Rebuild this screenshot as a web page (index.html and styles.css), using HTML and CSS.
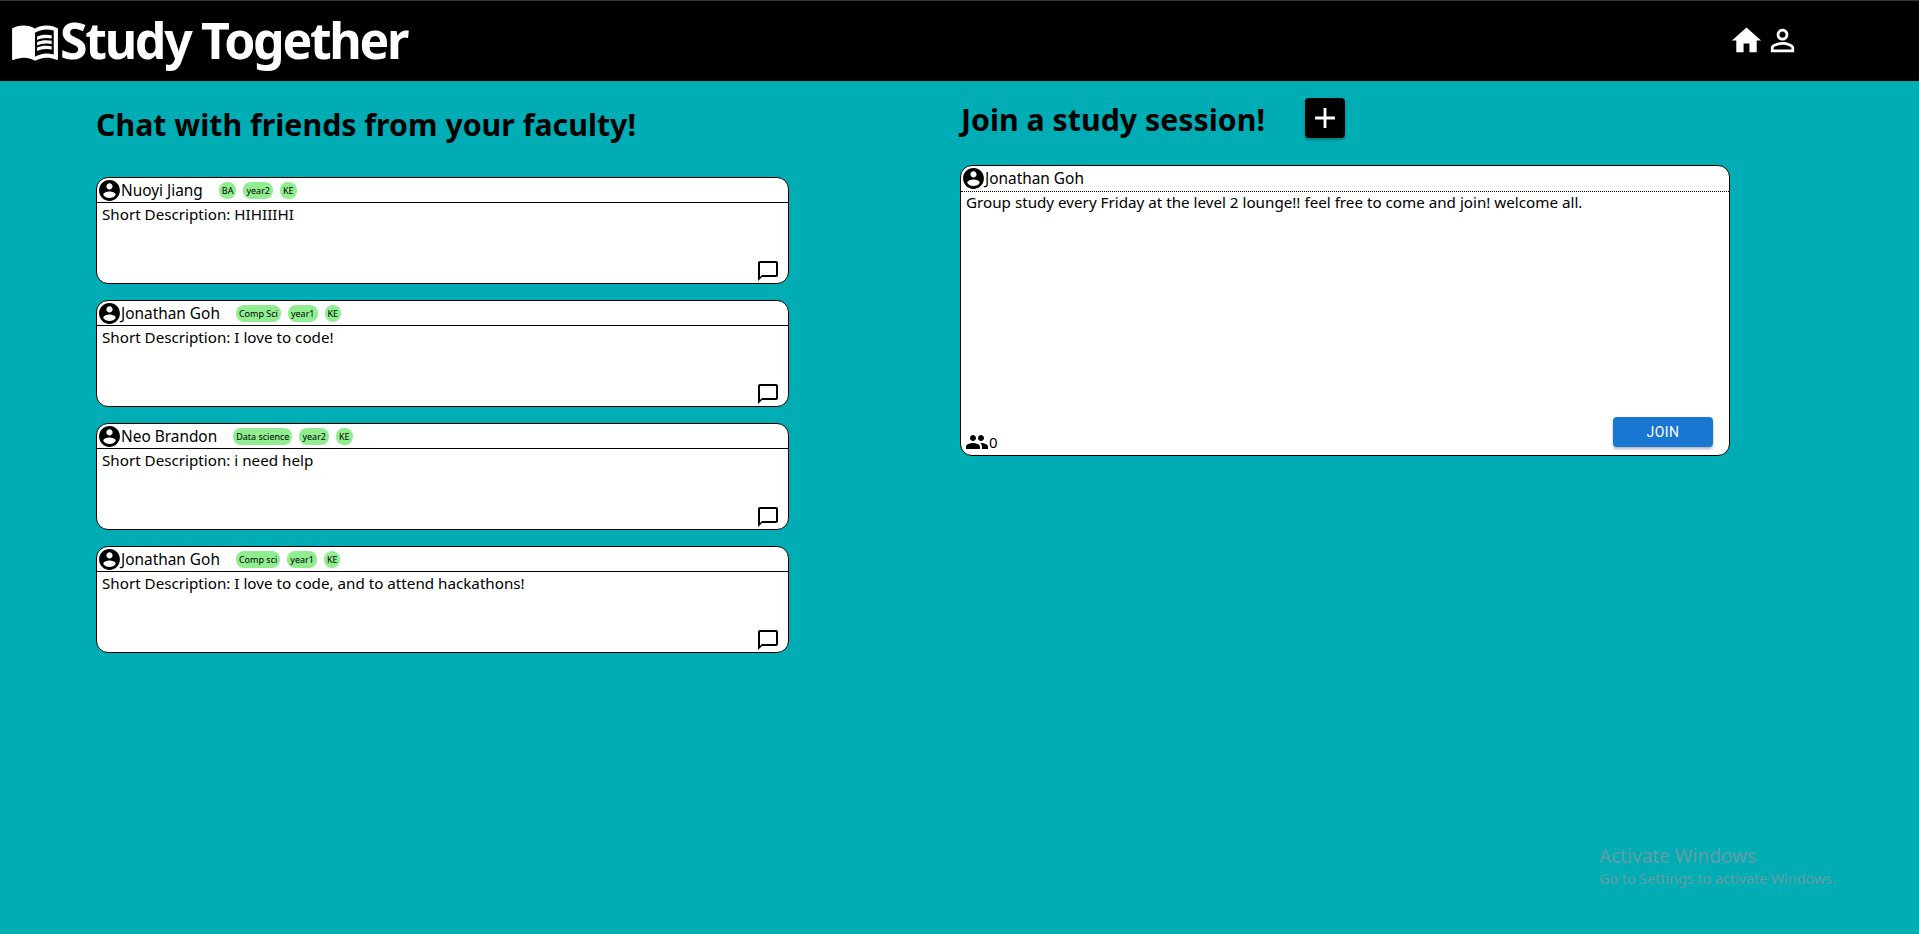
FILE: index.html
```html
<!DOCTYPE html>
<html lang="en">
<head>
	<meta charset="UTF-8">
	<title>Study Together</title>
	<link rel="stylesheet" href="styles.css">
</head>
<body>
	<svg width="0" height="0" class="defs">
		<symbol id="i-account" viewBox="0 0 24 24"><path d="M12 2C6.48 2 2 6.48 2 12s4.48 10 10 10 10-4.48 10-10S17.52 2 12 2zm0 3c1.66 0 3 1.34 3 3s-1.34 3-3 3-3-1.34-3-3 1.34-3 3-3zm0 14.2c-2.5 0-4.71-1.28-6-3.22.03-1.99 4-3.08 6-3.08 1.99 0 5.97 1.09 6 3.08-1.29 1.94-3.5 3.22-6 3.22z"/></symbol>
		<symbol id="i-chat" viewBox="0 0 24 24"><path d="M20 2H4c-1.1 0-2 .9-2 2v18l4-4h14c1.1 0 2-.9 2-2V4c0-1.1-.9-2-2-2zm0 14H6l-2 2V4h16v12z"/></symbol>
	</svg>

	<header class="topbar">
		<div class="brand">
			<svg class="brand-icon" viewBox="0 0 24 24"><path d="M21 5c-1.11-.35-2.33-.5-3.5-.5-1.95 0-4.05.4-5.5 1.5-1.45-1.1-3.55-1.5-5.5-1.5S2.45 4.9 1 6v14.65c0 .25.25.5.5.5.1 0 .15-.05.25-.05C3.1 20.45 5.05 20 6.5 20c1.95 0 4.05.4 5.5 1.5 1.35-.85 3.8-1.5 5.5-1.5 1.65 0 3.35.3 4.75 1.05.1.05.15.05.25.05.25 0 .5-.25.5-.5V6c-.6-.45-1.25-.75-2-1zm0 13.5c-1.1-.35-2.3-.5-3.5-.5-1.7 0-4.15.65-5.5 1.5V8c1.35-.85 3.8-1.5 5.5-1.5 1.2 0 2.4.15 3.5.5v11.5z"/><path d="M17.5 10.5c.88 0 1.73.09 2.5.26V9.24c-.79-.15-1.64-.24-2.5-.24-1.7 0-3.24.29-4.5.83v1.66c1.13-.64 2.7-.99 4.5-.99zM13 12.49v1.66c1.13-.64 2.7-.99 4.5-.99.88 0 1.73.09 2.5.26V11.9c-.79-.15-1.64-.24-2.5-.24-1.7 0-3.24.3-4.5.83zM17.5 14.33c-1.7 0-3.24.29-4.5.83v1.66c1.13-.64 2.7-.99 4.5-.99.88 0 1.73.09 2.5.26v-1.52c-.79-.16-1.64-.24-2.5-.24z"/></svg>
			<span class="brand-name">Study Together</span>
		</div>
		<nav class="topnav">
			<svg class="nav-icon" viewBox="0 0 24 24"><path d="M10 20v-6h4v6h5v-8h3L12 3 2 12h3v8z"/></svg>
			<svg class="nav-icon" viewBox="0 0 24 24"><path d="M12 5.9c1.16 0 2.1.94 2.1 2.1s-.94 2.1-2.1 2.1S9.9 9.16 9.9 8s.94-2.1 2.1-2.1m0 9c2.97 0 6.1 1.46 6.1 2.1v1.1H5.9V17c0-.64 3.13-2.1 6.1-2.1M12 4C9.79 4 8 5.79 8 8s1.79 4 4 4 4-1.79 4-4-1.79-4-4-4zm0 9c-2.67 0-8 1.34-8 4v3h16v-3c0-2.66-5.33-4-8-4z"/></svg>
		</nav>
	</header>

	<main class="columns">
		<section class="friends">
			<h2 class="heading friends-heading">Chat with friends from your faculty!</h2>

			<div class="card friend-card">
				<div class="card-head">
					<svg class="avatar"><use href="#i-account"/></svg>
					<span class="name">Nuoyi Jiang</span>
					<span class="tags"><span class="tag">BA</span><span class="tag">year2</span><span class="tag">KE</span></span>
				</div>
				<div class="card-body">
					<p class="desc">Short Description: HIHIIIHI</p>
					<svg class="chat"><use href="#i-chat"/></svg>
				</div>
			</div>

			<div class="card friend-card">
				<div class="card-head">
					<svg class="avatar"><use href="#i-account"/></svg>
					<span class="name">Jonathan Goh</span>
					<span class="tags"><span class="tag">Comp Sci</span><span class="tag">year1</span><span class="tag">KE</span></span>
				</div>
				<div class="card-body">
					<p class="desc">Short Description: I love to code!</p>
					<svg class="chat"><use href="#i-chat"/></svg>
				</div>
			</div>

			<div class="card friend-card">
				<div class="card-head">
					<svg class="avatar"><use href="#i-account"/></svg>
					<span class="name">Neo Brandon</span>
					<span class="tags"><span class="tag">Data science</span><span class="tag">year2</span><span class="tag">KE</span></span>
				</div>
				<div class="card-body">
					<p class="desc">Short Description: i need help</p>
					<svg class="chat"><use href="#i-chat"/></svg>
				</div>
			</div>

			<div class="card friend-card">
				<div class="card-head">
					<svg class="avatar"><use href="#i-account"/></svg>
					<span class="name">Jonathan Goh</span>
					<span class="tags"><span class="tag">Comp sci</span><span class="tag">year1</span><span class="tag">KE</span></span>
				</div>
				<div class="card-body">
					<p class="desc">Short Description: I love to code, and to attend hackathons!</p>
					<svg class="chat"><use href="#i-chat"/></svg>
				</div>
			</div>
		</section>

		<section class="sessions">
			<div class="sessions-top">
				<h2 class="heading session-heading">Join a study session!</h2>
				<button type="button" class="add-btn"><svg viewBox="0 0 24 24"><path d="M19 13h-6v6h-2v-6H5v-2h6V5h2v6h6v2z"/></svg></button>
			</div>

			<div class="card session-card">
				<div class="card-head session-head">
					<svg class="avatar"><use href="#i-account"/></svg>
					<span class="name">Jonathan Goh</span>
				</div>
				<div class="session-body">
					<p class="desc">Group study every Friday at the level 2 lounge!! feel free to come and join! welcome all.</p>
					<div class="session-foot">
						<span class="count">
							<svg class="people" viewBox="0 0 24 24"><path d="M16 11c1.66 0 2.99-1.34 2.99-3S17.66 5 16 5c-1.66 0-3 1.34-3 3s1.34 3 3 3zm-8 0c1.66 0 2.99-1.34 2.99-3S9.66 5 8 5C6.34 5 5 6.34 5 8s1.34 3 3 3zm0 2c-2.33 0-7 1.17-7 3.5V19h14v-2.5c0-2.33-4.67-3.5-7-3.5zm8 0c-.29 0-.62.02-.97.05 1.16.84 1.97 1.97 1.97 3.45V19h6v-2.5c0-2.33-4.67-3.5-7-3.5z"/></svg>0
						</span>
						<button type="button" class="join-btn">JOIN</button>
					</div>
				</div>
			</div>
		</section>
	</main>

	<div class="activate">
		<div class="activate-title">Activate Windows</div>
		<div class="activate-sub">Go to Settings to activate Windows.</div>
	</div>
</body>
</html>
```

FILE: styles.css
```css
html, body {
	height: 100%;
}
body {
	margin: 0;
	overflow: hidden;
	background: #00adb5;
	font-family: "Noto Sans", "Open Sans", sans-serif;
	color: #000;
}
.defs {
	display: block;
	height: 0;
}
.topbar {
	height: 80px;
	background: #000;
	border-top: 1px solid #333;
	display: flex;
	justify-content: space-between;
	align-items: center;
	color: #fff;
}
.brand {
	display: flex;
	align-items: center;
	padding-left: 10px;
}
.brand-icon {
	width: 50px;
	height: 50px;
	fill: #fff;
}
.brand-name {
	font-size: 50px;
	font-weight: 700;
	line-height: 60px;
	letter-spacing: -2.3px;
	margin-top: -3px;
}
.topnav {
	display: flex;
	gap: 1px;
	padding-right: 119px;
	margin-top: -2px;
}
.nav-icon {
	width: 35px;
	height: 35px;
	fill: #fff;
}
.columns {
	display: grid;
	grid-template-columns: 960px 1fr;
}
.friends {
	padding-left: 96px;
}
.heading {
	margin: 0;
	font-size: 30.3px;
	font-weight: 700;
	line-height: 42px;
}
.friends-heading {
	padding-top: 23px;
	margin-bottom: 31px;
}
.session-heading {
	padding-left: 1px;
}
.card {
	background: #fff;
	border: 1px solid #000;
	border-radius: 12px;
	box-sizing: border-box;
}
.friend-card {
	width: 693px;
	height: 107px;
	margin-bottom: 16px;
	display: flex;
	flex-direction: column;
}
.card-head {
	height: 24px;
	border-bottom: 1px solid #000;
	display: flex;
	align-items: center;
}
.avatar {
	width: 25px;
	height: 25px;
	fill: #000;
	flex: none;
	margin-right: -1px;
}
.name {
	font-size: 15.4px;
}
.tags {
	display: flex;
	gap: 7px;
	font-size: 9px;
	margin-left: 16px;
}
.tag {
	background: #90ee90;
	border-radius: 8px;
	padding: 0 3px;
	min-width: 10px;
	height: 17px;
	line-height: 17px;
	text-align: center;
}
.card-body {
	flex: 1;
	display: flex;
	flex-direction: column;
	padding: 1px 0 0 5px;
}
.desc {
	margin: 0;
	font-size: 15.2px;
	line-height: 20px;
}
.chat {
	width: 24px;
	height: 24px;
	fill: #000;
	align-self: flex-end;
	margin: auto 8px 0 0;
}
.sessions-top {
	display: flex;
	align-items: center;
	gap: 40px;
	padding-top: 10px;
	height: 67px;
	box-sizing: border-box;
	margin-bottom: 17px;
}
.add-btn {
	width: 40px;
	height: 40px;
	padding: 0;
	margin-top: -4px;
	border: 0;
	border-radius: 4px;
	background: #000;
	box-shadow: 0 2px 3px rgba(0, 0, 0, .3);
	display: flex;
	align-items: center;
	justify-content: center;
}
.add-btn svg {
	width: 34px;
	height: 34px;
	fill: #fff;
}
.session-card {
	width: 770px;
	height: 291px;
	display: flex;
	flex-direction: column;
}
.session-head {
	border-bottom: 1px dotted #000;
	height: 25px;
}
.session-body {
	flex: 1;
	display: flex;
	flex-direction: column;
	justify-content: space-between;
	padding: 0 16px 8px 5px;
}
.session-foot {
	display: flex;
	justify-content: space-between;
	align-items: flex-end;
}
.count {
	display: flex;
	align-items: center;
	font-size: 15px;
	line-height: 18px;
	margin: 0 0 -7px -1px;
}
.people {
	width: 24px;
	height: 24px;
	fill: #000;
}
.join-btn {
	width: 100px;
	height: 30px;
	border: 0;
	border-radius: 4px;
	background: #1976d2;
	color: #fff;
	font-family: "Roboto", sans-serif;
	font-size: 14px;
	font-weight: 400;
	letter-spacing: .4px;
	box-shadow: 0 2px 3px rgba(0, 0, 0, .3);
}
.activate {
	position: absolute;
	left: 1599px;
	top: 844px;
	color: #679ca3;
}
.activate-title {
	font-size: 19px;
	line-height: 25px;
}
.activate-sub {
	font-size: 14.3px;
	line-height: 19px;
}
```
